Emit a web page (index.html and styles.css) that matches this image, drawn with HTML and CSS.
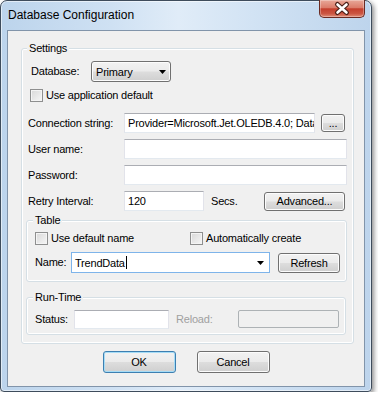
FILE: index.html
```html
<!DOCTYPE html>
<html lang="en">
<head>
    <meta charset="UTF-8">
    <title>Database Configuration</title>
    <link rel="stylesheet" href="styles.css">
</head>
<body>
    <div class="window">
        <div class="titlebar">
            <span class="title">Database Configuration</span>
            <div class="close">
                <svg width="46" height="17" viewBox="0 0 46 17">
                    <path d="M18.5 4.5 L27.5 12.5 M27.5 4.5 L18.5 12.5" stroke="#4a2019" stroke-width="5" stroke-linecap="round"/>
                    <path d="M18.5 4.5 L27.5 12.5 M27.5 4.5 L18.5 12.5" stroke="#ffffff" stroke-width="2.6" stroke-linecap="round"/>
                </svg>
            </div>
        </div>

        <div class="client">
            <div class="group settings">
                <span class="group-title">Settings</span>

                <div class="row row-db">
                    <span class="lbl w-db">Database:</span>
                    <div class="dropdown">
                        <span>Primary</span>
                        <svg class="arrow" width="7" height="4" viewBox="0 0 7 4"><polygon points="0,0 7,0 3.5,4" fill="#000"/></svg>
                    </div>
                </div>

                <div class="row row-check">
                    <span class="check"><span class="box"></span>Use application default</span>
                </div>

                <div class="row row-field row-first">
                    <span class="lbl w-conn">Connection string:</span>
                    <div class="field w-conn-field">Provider=Microsoft.Jet.OLEDB.4.0; Data</div>
                    <button class="btn btn-dots">...</button>
                </div>

                <div class="row row-field">
                    <span class="lbl w-conn">User name:</span>
                    <div class="field w-wide"></div>
                </div>

                <div class="row row-field">
                    <span class="lbl w-conn">Password:</span>
                    <div class="field w-wide"></div>
                </div>

                <div class="row row-field">
                    <span class="lbl w-conn">Retry Interval:</span>
                    <div class="field w-retry">120</div>
                    <span class="lbl w-secs">Secs.</span>
                    <button class="btn btn-adv">Advanced...</button>
                </div>

                <div class="group table">
                    <span class="group-title">Table</span>
                    <div class="row row-tcheck">
                        <span class="check w-first"><span class="box"></span>Use default name</span>
                        <span class="check"><span class="box"></span>Automatically create</span>
                    </div>
                    <div class="row row-name">
                        <span class="lbl w-name">Name:</span>
                        <div class="combo">
                            <span>TrendData</span><span class="caret"></span>
                            <svg class="arrow" width="7" height="4" viewBox="0 0 7 4"><polygon points="0,0 7,0 3.5,4" fill="#000"/></svg>
                        </div>
                        <button class="btn btn-refresh">Refresh</button>
                    </div>
                </div>

                <div class="group runtime">
                    <span class="group-title">Run-Time</span>
                    <div class="row row-status">
                        <span class="lbl w-status">Status:</span>
                        <div class="field w-status-field"></div>
                        <span class="lbl disabled w-reload">Reload:</span>
                        <div class="field disabled-field"></div>
                    </div>
                </div>
            </div>

            <div class="actions">
                <button class="btn btn-main default">OK</button>
                <button class="btn btn-main">Cancel</button>
            </div>
        </div>
    </div>
</body>
</html>
```

FILE: styles.css
```css
* {
    margin: 0;
    padding: 0;
    box-sizing: border-box;
}

body {
    background: #ffffff;
    font-family: 'Liberation Sans', Arial, sans-serif;
    font-size: 11px;
    letter-spacing: -0.2px;
    color: #000000;
}

.window {
    width: 372px;
    height: 392px;
    border: 1px solid #3e4c5c;
    border-radius: 7px 7px 4px 4px;
    background: linear-gradient(to right, #bcd4ec 0%, #cfe1f3 30%, #e0ecf8 48%, #d2e3f4 68%, #bdd4ec 100%);
    box-shadow: 2px 2px 5px rgba(0, 0, 0, 0.45), inset 0 0 0 1px rgba(255, 255, 255, 0.55);
}

.titlebar {
    height: 29px;
    display: flex;
    align-items: center;
    padding-left: 7px;
}

.title {
    font-size: 12px;
    letter-spacing: 0;
    padding-bottom: 1px;
}

.close {
    align-self: flex-start;
    margin: -1px 6px 0 auto;
    width: 46px;
    height: 18px;
    border: 1px solid #6a2a22;
    border-top: none;
    border-radius: 0 0 5px 5px;
    background: linear-gradient(#e8a899 0%, #db7c6a 45%, #c43f2d 52%, #cb5642 80%, #e08d78 100%);
    box-shadow: inset 0 0 0 1px rgba(255, 255, 255, 0.3);
}

.close svg {
    display: block;
    margin: 0 0 0 -1px;
}

.client {
    margin: 0 6px;
    height: 357px;
    border: 1px solid #8194aa;
    background: #f0f0f0;
    padding: 17px 0 0 13px;
}

.group {
    position: relative;
    border: 1px solid #d5dfe5;
    border-radius: 3px;
    box-shadow: inset 0 0 0 1px #ffffff;
}

.group-title {
    position: absolute;
    top: -7px;
    left: 5px;
    padding: 0 2px;
    line-height: 13px;
    background: #f0f0f0;
}

.settings {
    width: 333px;
    height: 296px;
}

.table {
    margin: 9px 0 0 4px;
    width: 321px;
    height: 62px;
}

.runtime {
    margin: 15px 0 0 4px;
    width: 320px;
    height: 38px;
}

.table .group-title,
.runtime .group-title {
    left: 6px;
}

.row {
    display: flex;
    align-items: center;
}

.lbl {
    flex: none;
    line-height: 13px;
}

.row-db {
    margin-top: 12px;
    padding-left: 9px;
    height: 21px;
}

.w-db { width: 60px; }

.dropdown {
    width: 80px;
    height: 21px;
    border: 1px solid #707070;
    border-radius: 3px;
    background: linear-gradient(#f2f2f2 0%, #ebebeb 48%, #dddddd 52%, #cfcfcf 100%);
    box-shadow: inset 0 0 0 1px #fcfcfc;
    display: flex;
    align-items: center;
    justify-content: space-between;
    padding: 0 4px 0 4px;
}

.arrow {
    display: block;
    flex: none;
}

.row-check {
    margin-top: 7px;
    padding-left: 8px;
    height: 13px;
}

.check {
    display: flex;
    align-items: center;
    line-height: 13px;
}

.box {
    width: 13px;
    height: 13px;
    margin-right: 3px;
    border: 1px solid #8e8f8f;
    background: linear-gradient(135deg, #d8d8d8 0%, #f6f6f6 100%);
    box-shadow: inset 0 0 0 1px #f4f4f4;
    flex: none;
}

.row-field {
    margin-top: 6px;
    padding-left: 6px;
    height: 20px;
}

.row-first { margin-top: 11px; }

.w-conn { width: 96px; }

.field {
    height: 20px;
    border: 1px solid;
    border-color: #abadb3 #e2e3ea #e3e9ef #e2e3ea;
    background: #ffffff;
    padding: 0 3px;
    line-height: 18px;
    white-space: nowrap;
    overflow: hidden;
    flex: none;
}

.w-conn-field { width: 191px; }
.w-wide { width: 223px; }
.w-retry { width: 80px; }

.w-secs {
    width: 53px;
    margin-left: 7px;
}

.btn {
    font-family: inherit;
    font-size: 11px;
    letter-spacing: -0.2px;
    color: #000000;
    border: 1px solid #707070;
    border-radius: 3px;
    background: linear-gradient(#f2f2f2 0%, #ebebeb 48%, #dddddd 52%, #cfcfcf 100%);
    box-shadow: inset 0 0 0 1px #fcfcfc;
    flex: none;
}

.btn-dots {
    width: 24px;
    height: 18px;
    margin-left: 6px;
    line-height: 12px;
}

.btn-adv {
    width: 81px;
    height: 19px;
}

.row-tcheck {
    margin-top: 11px;
    padding-left: 8px;
    height: 13px;
}

.w-first { width: 155px; }

.row-name {
    margin-top: 7px;
    padding-left: 8px;
    height: 21px;
}

.w-name { width: 36px; }

.combo {
    width: 199px;
    height: 21px;
    border: 1px solid #7eb4ea;
    background: #ffffff;
    display: flex;
    align-items: center;
    padding: 0 4px 0 3px;
    flex: none;
}

.caret {
    width: 1px;
    height: 13px;
    background: #000000;
    margin-left: 1px;
}

.combo .arrow {
    margin-left: auto;
    margin-right: 1px;
}

.btn-refresh {
    width: 62px;
    height: 20px;
    margin-left: 8px;
}

.row-status {
    margin-top: 11px;
    padding-left: 8px;
    height: 20px;
}

.w-status { width: 39px; }

.w-status-field {
    width: 95px;
    height: 19px;
}

.disabled { color: #a0a0a0; }

.w-reload {
    width: 62px;
    margin-left: 7px;
}

.disabled-field {
    width: 101px;
    height: 18px;
    border: 1px solid #adb2b5;
    border-radius: 2px;
    background: #f0f0f0;
}

.actions {
    display: flex;
    justify-content: center;
    gap: 21px;
    margin: 7px 0 0 -13px;
}

.btn-main {
    width: 73px;
    height: 22px;
}

.btn-main.default {
    border-color: #3c7fb1;
    box-shadow: inset 0 0 0 1px #a6dcf6;
}
```
